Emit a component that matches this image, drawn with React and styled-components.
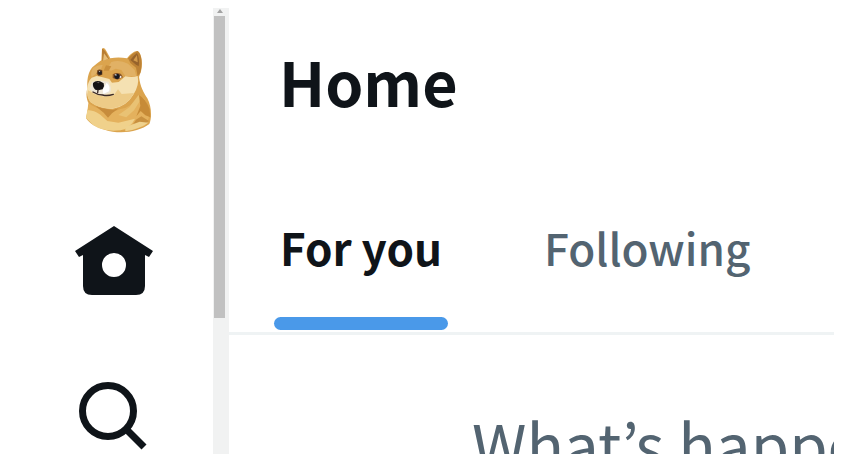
import React, { useState } from "react";
import styled, { createGlobalStyle } from "styled-components";

const tabs = ["For you", "Following"];

const DogeLogo = () => (
	<svg width="76" height="93" viewBox="18 36 228 279" aria-hidden="true">
		<path
			d="M96 41Q103 35 109 48L121 70Q145 65 171 70C180 58 194 47 203 48C215 54 219 86 213 109L207 126C211 156 221 173 232 190C245 214 246 249 238 267C208 290 151 300 104 284C78 277 58 265 48 249L57 207C48 192 48 174 52 160C51 134 54 112 67 97Q82 84 94 76Z"
			fill="#dba44e"
		/>
		<path d="M96 41Q104 40 117 71L97 77Z" fill="#b77c32" />
		<path d="M102 55L115 72L99 77Z" fill="#e6bd78" />
		<path
			d="M202 48C216 56 218 89 211 113L203 124L198 98L181 84L174 70Q187 54 202 48Z"
			fill="#bd8235"
		/>
		<path d="M201 54Q210 72 206 94L196 88L181 75Q190 62 201 54Z" fill="#97632b" />
		<path d="M201 60L203 82L190 76Z" fill="#d39a4b" />
		<path
			d="M70 98Q85 88 98 90L92 105L80 115L65 126Q60 113 70 98ZM124 81Q150 73 174 86L194 105L199 124L166 124L154 105L137 101L123 107L111 101Z"
			fill="#e1b165"
		/>
		<path d="M108 91L124 94L116 107L101 107Z" fill="#c98f3d" />
		<path
			d="M51 160Q54 139 65 128L80 123L98 127L118 132L126 143L146 141L166 124Q188 128 203 123Q209 151 190 179Q170 214 128 221Q91 223 62 202Q49 186 51 160Z"
			fill="#f5e1b2"
		/>
		<path
			d="M54 166L75 178L103 185L131 181L144 163L155 177L192 174Q173 213 130 220Q87 222 60 200Q50 185 54 166Z"
			fill="#edcb87"
		/>
		<path d="M66 140L94 137L116 140Q128 162 119 175L98 181L71 174L59 162Z" fill="#eee6d6" />
		<path d="M110 143Q122 153 117 169L100 177L98 164Z" fill="#fff" />
		<path
			d="M55 204Q75 219 96 223L109 230L127 232L151 222Q187 217 207 179L224 193L238 224Q241 251 224 273Q158 294 95 277Q68 268 50 249Z"
			fill="#e4b15d"
		/>
		<path
			d="M77 214L98 220L128 225L146 220L126 235L114 248L101 233Z"
			fill="#c78c3c"
		/>
		<path
			d="M52 225Q73 226 91 239L112 258L145 263L195 251Q182 278 152 286Q101 292 70 271L48 249Z"
			fill="#f0d18b"
		/>
		<path d="M145 240L178 217L205 181L215 190L192 226L169 247Z" fill="#e9c274" />
		<path
			d="M207 180Q226 190 239 222L241 247L226 241L212 228L199 244L211 213Z"
			fill="#c78b37"
		/>
		<path d="M198 254L214 244L237 258L211 276L178 284Z" fill="#c8903f" />
		<path d="M166 276L209 260L235 263Q210 281 166 289Z" fill="#efd28e" />
		<path d="M82 106Q88 101 97 106L97 119L86 123L80 116Z" fill="#70451f" />
		<circle cx="90" cy="113" r="6" fill="#26201f" />
		<path d="M87 109L91 108L89 112Z" fill="#fff" />
		<path d="M128 118Q140 111 153 117L159 127L142 134L128 129Z" fill="#8a5829" />
		<circle cx="141" cy="124" r="8" fill="#171820" />
		<path d="M134 119L139 117L139 123ZM150 122L156 126L149 130Z" fill="#fff" />
		<path
			d="M69 144Q77 135 90 139L101 145Q105 154 98 163L84 166L76 164Q67 157 69 144Z"
			fill="#151315"
		/>
		<path d="M79 142L89 141L86 145Z" fill="#696162" />
		<path
			d="M84 165L83 173M69 171Q83 180 98 180Q112 184 130 178"
			fill="none"
			stroke="#3b2925"
			strokeWidth="4"
			strokeLinecap="round"
		/>
	</svg>
);

const HomeIcon = () => (
	<svg width="78" height="70" viewBox="0 0 78 70" aria-hidden="true">
		<path
			fillRule="evenodd"
			d="M39 0L78 25L74 31L70 29V60Q70 69 61 69H17Q8 69 8 60V29L4 31L0 25ZM39 27A12 12 0 1 0 39 51A12 12 0 1 0 39 27Z"
			fill="#0f1419"
		/>
	</svg>
);

const SearchIcon = () => (
	<svg width="70" height="68" viewBox="0 0 70 68" aria-hidden="true">
		<circle cx="29" cy="29" r="25.5" fill="none" stroke="#0f1419" strokeWidth="7" />
		<path d="M47 47L65 65" stroke="#0f1419" strokeWidth="7" />
	</svg>
);

const App = () => {
	const [activeTab, setActiveTab] = useState("For you");
	const [post, setPost] = useState("");

	return (
		<Page>
			<GlobalStyle />
			<Sidebar aria-label="Primary">
				<NavLink href="#logo" aria-label="Logo">
					<DogeLogo />
				</NavLink>
				<NavLink href="#home" aria-label="Home">
					<HomeIcon />
				</NavLink>
				<NavLink href="#search" aria-label="Search">
					<SearchIcon />
				</NavLink>
			</Sidebar>
			<ScrollTrack aria-hidden="true">
				<ScrollArrow viewBox="0 0 6 4">
					<path d="M3 0L6 4H0Z" fill="#a3a3a3" />
				</ScrollArrow>
				<ScrollThumb />
			</ScrollTrack>
			<Timeline>
				<Title>Home</Title>
				<TabBar role="tablist">
					{tabs.map((tab) => (
						<Tab
							key={tab}
							type="button"
							role="tab"
							aria-selected={tab === activeTab}
							$active={tab === activeTab}
							onClick={() => setActiveTab(tab)}
						>
							{tab}
						</Tab>
					))}
				</TabBar>
				<Composer>
					<input
						type="text"
						aria-label="Post text"
						placeholder="What’s happening?"
						value={post}
						onChange={(e) => setPost(e.target.value)}
					/>
				</Composer>
			</Timeline>
		</Page>
	);
};

const GlobalStyle = createGlobalStyle`
	* {
		box-sizing: border-box;
	}
	body {
		margin: 0;
		background-color: #fff;
		color: #0f1419;
		font-family: "Noto Sans CJK JP", "Noto Sans", sans-serif;
	}
`;

const Page = styled.div`
	display: grid;
	grid-template-columns: 197px 16px minmax(0, 1fr);
	height: 100vh;
	padding: 8px 16px 0;
	overflow: hidden;
`;

const Sidebar = styled.nav`
	display: flex;
	flex-direction: column;
	align-items: center;
	gap: 86px;
	padding: 39px 2px 0 0;
	min-height: 0;
`;

const NavLink = styled.a`
	display: flex;
	flex-shrink: 0;
`;

const ScrollTrack = styled.div`
	display: flex;
	flex-direction: column;
	align-items: flex-start;
	padding: 1px;
	background-color: #f1f2f2;
`;

const ScrollArrow = styled.svg`
	width: 6px;
	height: 4px;
	margin: 0 3px 3px;
`;

const ScrollThumb = styled.div`
	width: 11px;
	height: 68%;
	background-color: #c1c1c1;
`;

const Timeline = styled.main`
	min-height: 0;
	overflow: hidden;
`;

const Title = styled.h1`
	margin: 0;
	padding: 31px 50px 0;
	font-size: 61px;
	font-weight: 700;
	line-height: 84px;
`;

const TabBar = styled.div`
	display: flex;
	gap: 90px;
	padding: 72px 45px 0;
	border-bottom: 3px solid #eff3f4;
`;

const Tab = styled.button`
	display: flex;
	flex-direction: column;
	padding: 0 6px;
	border: none;
	background: none;
	color: ${({ $active }) => ($active ? "#0f1419" : "#536471")};
	font-family: inherit;
	font-size: 44px;
	font-weight: ${({ $active }) => ($active ? 700 : 500)};
	line-height: 104px;
	cursor: pointer;
	&::after {
		content: "";
		align-self: stretch;
		height: 13px;
		margin: 18px -6px 2px;
		border-radius: 8px;
		background-color: ${({ $active }) => ($active ? "#4a99e9" : "transparent")};
	}
`;

const Composer = styled.div`
	padding: 66px 0 0 243px;
	input {
		width: 100%;
		padding: 0;
		border: none;
		outline: none;
		background: transparent;
		color: #0f1419;
		font-family: inherit;
		font-size: 62px;
		line-height: 84px;
		&::placeholder {
			color: #536471;
			opacity: 1;
		}
	}
`;

export default App;
